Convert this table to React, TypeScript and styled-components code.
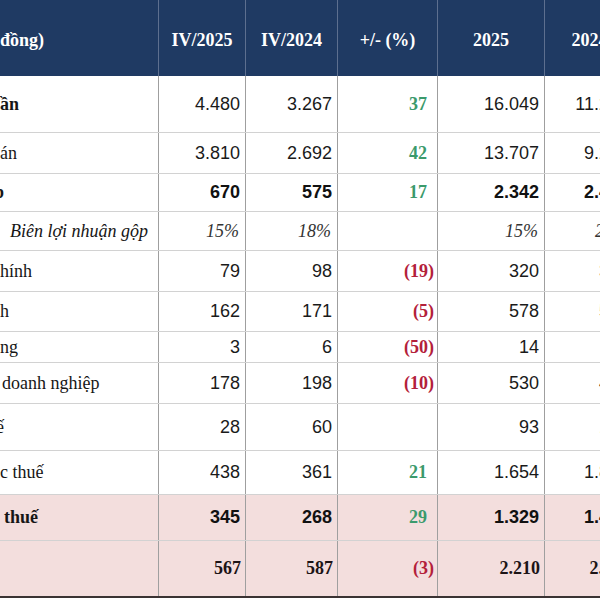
import React from "react";
import styled, { createGlobalStyle, css } from "styled-components";

const Global = createGlobalStyle`
  html, body { margin: 0; padding: 0; background: #fff; }
  body { width: 600px; height: 600px; overflow: hidden; }
`;

const COLS = "159px 87px 92px 100px 107px 90px";

const Frame = styled.div`
  width: 600px;
  height: 600px;
  overflow: hidden;
  background: #fff;
`;

const Sheet = styled.div`
  width: 635px;
  display: flex;
  flex-direction: column;
`;

const HeadRow = styled.div`
  display: grid;
  grid-template-columns: ${COLS};
  height: 76px;
  background: #1f3a63;
`;

const HeadCell = styled.div<{ $left?: boolean }>`
  display: flex;
  align-items: center;
  justify-content: ${(p) => (p.$left ? "flex-start" : "center")};
  padding-top: 4px;
  border-right: 1px solid #5d6f8f;
  color: #fff;
  font-family: "Liberation Serif", "Times New Roman", serif;
  font-weight: bold;
  font-size: 18px;
  white-space: nowrap;
  overflow: hidden;
`;

const Row = styled.div<{ $h: number; $pink?: boolean; $last?: boolean }>`
  display: grid;
  grid-template-columns: ${COLS};
  height: ${(p) => p.$h}px;
  box-sizing: border-box;
  background: ${(p) => (p.$pink ? "#f3dedd" : "#fff")};
  border-bottom: ${(p) => (p.$last ? "2px solid #3a3333" : "1px solid #d2d2d2")};
`;

const Label = styled.div<{ $bold?: boolean; $italic?: boolean; $indent: number }>`
  display: flex;
  align-items: center;
  border-right: 1px solid #9f9f9f;
  font-family: "Liberation Serif", "Times New Roman", serif;
  font-size: 18px;
  color: #161616;
  white-space: nowrap;
  overflow: hidden;
  font-weight: ${(p) => (p.$bold ? "bold" : "normal")};
  font-style: ${(p) => (p.$italic ? "italic" : "normal")};
  & > span {
    margin-left: ${(p) => p.$indent}px;
  }
`;

type Kind = "num" | "numBold" | "serifBold" | "italic" | "pos" | "neg";

const Cell = styled.div<{ $kind: Kind }>`
  display: flex;
  align-items: center;
  justify-content: flex-end;
  border-right: 1px solid #9f9f9f;
  padding-right: 5px;
  font-size: 18px;
  color: #1a1a1a;
  white-space: nowrap;
  overflow: hidden;
  font-family: "Liberation Sans", Arial, sans-serif;
  ${(p) =>
    p.$kind === "numBold" &&
    css`
      font-weight: bold;
      color: #111;
    `}
  ${(p) =>
    p.$kind === "serifBold" &&
    css`
      font-family: "Liberation Serif", "Times New Roman", serif;
      font-weight: bold;
      color: #1c1416;
      padding-right: 4px;
    `}
  ${(p) =>
    p.$kind === "italic" &&
    css`
      font-family: "Liberation Serif", "Times New Roman", serif;
      font-style: italic;
      color: #333;
      padding-right: 6px;
    `}
  ${(p) =>
    p.$kind === "pos" &&
    css`
      font-family: "Liberation Serif", "Times New Roman", serif;
      font-weight: bold;
      color: #3b9a6c;
      padding-right: 10px;
    `}
  ${(p) =>
    p.$kind === "neg" &&
    css`
      font-family: "Liberation Serif", "Times New Roman", serif;
      font-weight: bold;
      color: #b3203a;
      padding-right: 3px;
    `}
`;

type RowData = {
  label: string;
  indent: number;
  h: number;
  bold?: boolean;
  italic?: boolean;
  pink?: boolean;
  kind: Kind;
  vals: string[];
  pct: string;
};

const rows: RowData[] = [
  { label: "ần", indent: 0, h: 57, bold: true, kind: "num", vals: ["4.480", "3.267", "16.049", "11.251"], pct: "37" },
  { label: "án", indent: 0, h: 41, kind: "num", vals: ["3.810", "2.692", "13.707", "9.202"], pct: "42" },
  { label: "p", indent: -6, h: 38, bold: true, kind: "numBold", vals: ["670", "575", "2.342", "2.449"], pct: "17" },
  { label: "Biên lợi nhuận gộp", indent: 10, h: 39, italic: true, kind: "italic", vals: ["15%", "18%", "15%", "21%"], pct: "" },
  { label: "hính", indent: 0, h: 41, kind: "num", vals: ["79", "98", "320", "346"], pct: "(19)" },
  { label: "h", indent: 0, h: 40, kind: "num", vals: ["162", "171", "578", "571"], pct: "(5)" },
  { label: "ng", indent: 0, h: 31, kind: "num", vals: ["3", "6", "14", "16"], pct: "(50)" },
  { label: " doanh nghiệp", indent: 2, h: 41, kind: "num", vals: ["178", "198", "530", "447"], pct: "(10)" },
  { label: "ế", indent: -4, h: 47, kind: "num", vals: ["28", "60", "93", "108"], pct: "" },
  { label: "c thuế", indent: 0, h: 44, kind: "num", vals: ["438", "361", "1.654", "1.853"], pct: "21" },
  { label: " thuế", indent: 4, h: 46, bold: true, pink: true, kind: "numBold", vals: ["345", "268", "1.329", "1.494"], pct: "29" },
  { label: "", indent: 0, h: 57, bold: true, pink: true, kind: "serifBold", vals: ["567", "587", "2.210", "2.283"], pct: "(3)" },
];

const pctKind = (v: string): Kind => (v.startsWith("(") ? "neg" : "pos");

export default function App() {
  return (
    <Frame>
      <Global />
      <Sheet>
        <HeadRow>
          <HeadCell $left>đồng)</HeadCell>
          <HeadCell>IV/2025</HeadCell>
          <HeadCell>IV/2024</HeadCell>
          <HeadCell>+/- (%)</HeadCell>
          <HeadCell>2025</HeadCell>
          <HeadCell>2024</HeadCell>
        </HeadRow>
        {rows.map((r, i) => (
          <Row key={i} $h={r.h} $pink={r.pink} $last={i === rows.length - 1}>
            <Label $bold={r.bold} $italic={r.italic} $indent={r.indent}>
              <span>{r.label}</span>
            </Label>
            <Cell $kind={r.kind}>{r.vals[0]}</Cell>
            <Cell $kind={r.kind}>{r.vals[1]}</Cell>
            <Cell $kind={pctKind(r.pct)}>{r.pct}</Cell>
            <Cell $kind={r.kind}>{r.vals[2]}</Cell>
            <Cell $kind={r.kind}>{r.vals[3]}</Cell>
          </Row>
        ))}
      </Sheet>
    </Frame>
  );
}
